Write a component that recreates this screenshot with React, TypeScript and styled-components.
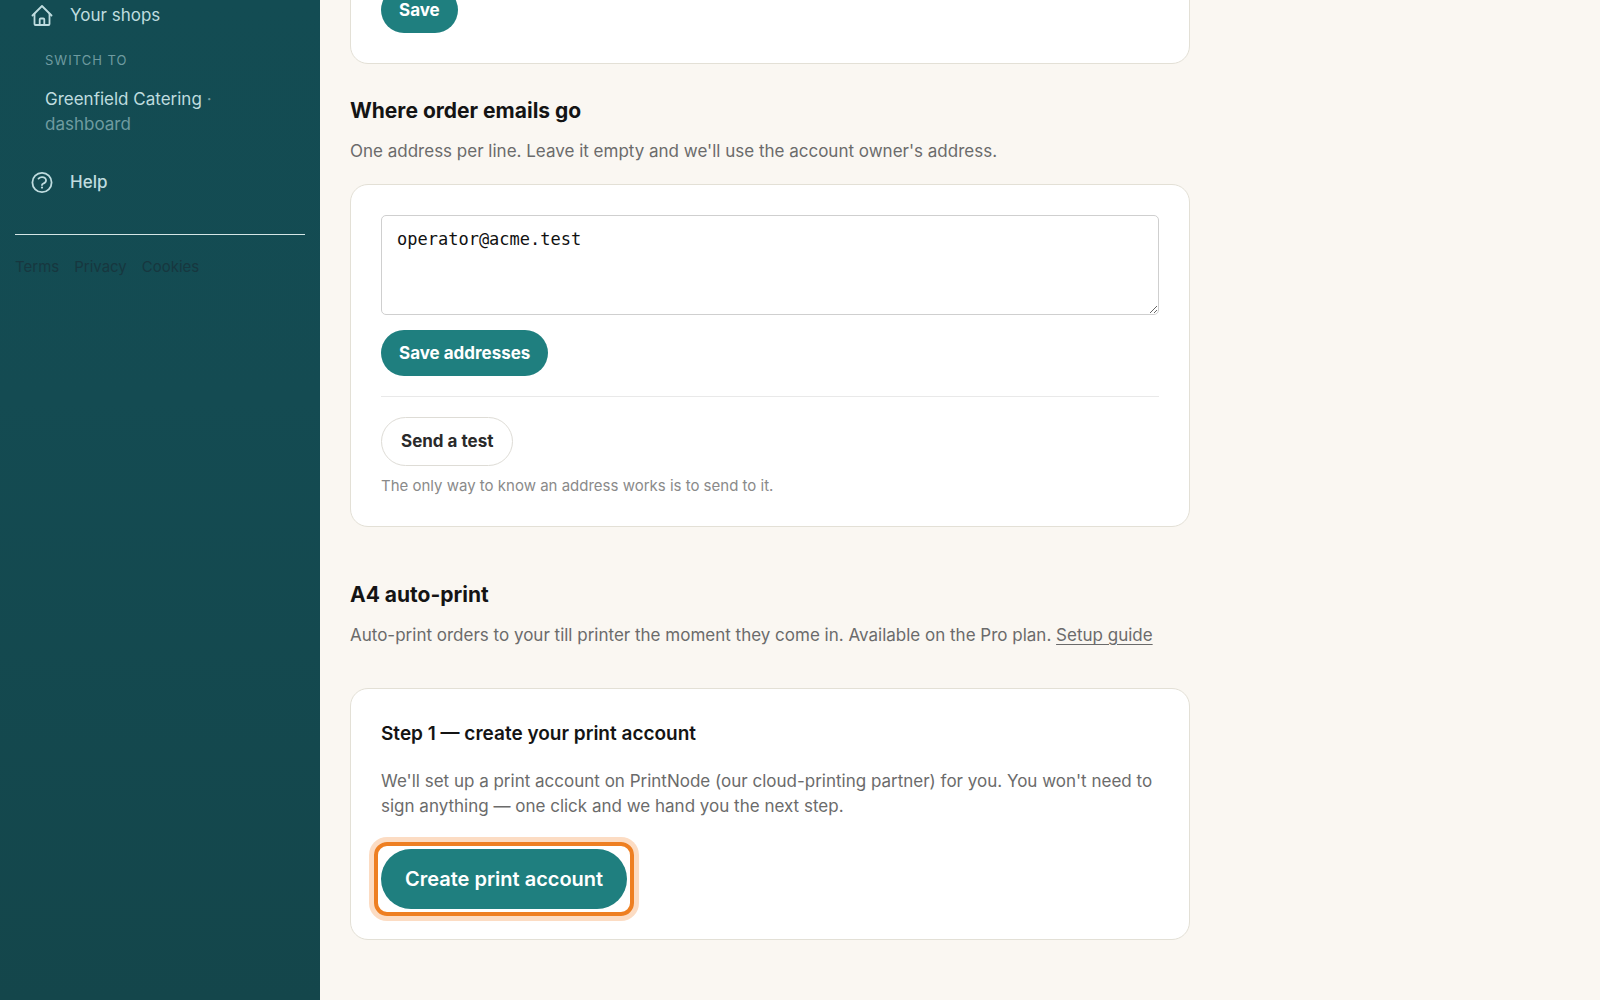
import React from "react";
import styled, { createGlobalStyle, css } from "styled-components";

const GlobalStyle = createGlobalStyle`
  *, *::before, *::after { box-sizing: border-box; }
  body {
    margin: 0;
    background: #faf7f2;
    color: #141414;
    font-family: Inter, "Liberation Sans", sans-serif;
    font-size: 17px;
    line-height: 25px;
  }
  h2, h3, p { margin: 0; }
`;

const Page = styled.div`
  display: flex;
  min-height: 100vh;
  overflow: hidden;
`;

const Sidebar = styled.aside`
  flex: 0 0 320px;
  padding: 1px 15px 0;
  background: linear-gradient(180deg, #134c53 0%, #144b52 40%, #14464b 100%);
`;

const NavItem = styled.a<{ $strong?: boolean }>`
  display: flex;
  align-items: center;
  gap: 17px;
  padding: 2px 16px;
  color: #bfdcdf;
  font-weight: ${(p) => (p.$strong ? 500 : 400)};
  text-decoration: none;

  svg { flex: none; }
`;

const Switcher = styled.div`
  padding: 18px 30px 31px;
`;

const SwitchLabel = styled.p`
  margin-bottom: 15px;
  color: #6f9ba0;
  font-size: 13px;
  line-height: 24px;
  letter-spacing: 1px;
  text-transform: uppercase;
`;

const SwitchLink = styled.a`
  display: flex;
  flex-wrap: wrap;
  column-gap: 5px;
  max-width: 200px;
  color: #bfdcdf;
  text-decoration: none;
`;

const Muted = styled.span`
  color: #6f9ba0;
`;

const LegalLinks = styled.nav`
  display: flex;
  gap: 15px;
  margin-top: 37px;
  padding-top: 19px;
  border-top: 1px solid #d5e6e6;

  a {
    color: #17373f;
    font-size: 15px;
    text-decoration: none;
  }
`;

/* The page rests part-way down, so the first card begins above the fold. */
const Main = styled.main`
  flex: 1;
  min-width: 0;
  max-width: 900px;
  margin-top: -44px;
  padding: 0 30px 60px;
`;

const Section = styled.section<{ $gap: number }>`
  margin-top: ${(p) => p.$gap}px;
`;

const Card = styled.div`
  padding: 30px;
  background: #fff;
  border: 1px solid #e3e0d6;
  border-radius: 18px;
`;

const SectionTitle = styled.h2`
  margin-bottom: 13px;
  font-size: 21px;
  line-height: 30px;
  font-weight: 700;
`;

const StepTitle = styled.h3`
  margin-bottom: 20px;
  font-size: 19px;
  line-height: 30px;
  font-weight: 600;
`;

const Lead = styled.p<{ $gap: number }>`
  margin-bottom: ${(p) => p.$gap}px;
  color: #6b6b6b;

  a {
    color: inherit;
    text-underline-offset: 3px;
  }
`;

const Addresses = styled.textarea`
  display: block;
  width: 100%;
  height: 100px;
  margin-bottom: 15px;
  padding: 11px 15px;
  background: #fff;
  border: 1px solid #cfcfcf;
  border-radius: 5px;
  color: #111;
  font-family: "DejaVu Sans Mono", monospace;
  font-size: 17px;
  line-height: 25px;
  resize: vertical;
`;

const Button = styled.button<{ $kind?: "outline" | "large" }>`
  display: block;
  height: 46px;
  padding: 0 18px;
  background: #1f7f7f;
  border: 0;
  border-radius: 30px;
  color: #fff;
  font-family: inherit;
  font-size: 17px;
  line-height: 25px;
  font-weight: 700;
  white-space: nowrap;

  ${(p) => p.$kind === "outline" && css`
    height: 49px;
    padding: 0 19px;
    background: #fff;
    border: 1px solid #dedcd6;
    color: #2a2a2a;
  `}

  ${(p) => p.$kind === "large" && css`
    height: 60px;
    padding: 0 24px;
    font-size: 20px;
    font-weight: 600;
  `}
`;

const Divider = styled.hr`
  height: 1px;
  margin: 20px 0;
  border: 0;
  background: #e9e9e9;
`;

const Hint = styled.p`
  margin-top: 9px;
  color: #8a8a8a;
  font-size: 15px;
  line-height: 21px;
`;

const Spotlight = styled.div`
  position: relative;
  width: fit-content;

  &::after {
    content: "";
    position: absolute;
    inset: -7px;
    border: 4px solid #ee7f22;
    border-radius: 13px;
    box-shadow: 0 0 0 5px #fcdcc3;
    pointer-events: none;
  }
`;

const HomeIcon = () => (
  <svg width="22" height="22" viewBox="0 0 22 22" fill="none" stroke="currentColor" strokeWidth="1.8" strokeLinecap="round" strokeLinejoin="round" aria-hidden="true">
    <path d="M1.5 10.500 11 1 20.500 10.500" />
    <path d="M3.500 8.700V19a1 1 0 0 0 1 1h13a1 1 0 0 0 1-1V8.700" />
    <path d="M8.700 19.800v-5.300a1 1 0 0 1 1-1h2.600a1 1 0 0 1 1 1v5.300" />
  </svg>
);

const HelpIcon = () => (
  <svg width="22" height="22" viewBox="0 0 22 22" fill="none" stroke="currentColor" strokeWidth="1.8" strokeLinecap="round" strokeLinejoin="round" aria-hidden="true">
    <circle cx="11" cy="10.500" r="9.600" />
    <path d="M7.500 6.600c1.900-1.800 5-1.900 6.600-.4 1.400 1.400 1.200 3.400-.3 4.500-1.400 1-2.800 1.100-2.800 2.300" />
    <path d="M11 15.500v.1" strokeWidth="2.200" />
  </svg>
);

export default function App() {
  return (
    <Page>
      <GlobalStyle />
      <Sidebar>
        <NavItem href="#shops"><HomeIcon />Your shops</NavItem>
        <Switcher>
          <SwitchLabel>Switch to</SwitchLabel>
          <SwitchLink href="#greenfield">
            <span>Greenfield Catering</span>
            <Muted>·</Muted>
            <Muted>dashboard</Muted>
          </SwitchLink>
        </Switcher>
        <NavItem href="#help" $strong><HelpIcon />Help</NavItem>
        <LegalLinks aria-label="Legal">
          <a href="#terms">Terms</a>
          <a href="#privacy">Privacy</a>
          <a href="#cookies">Cookies</a>
        </LegalLinks>
      </Sidebar>

      <Main>
        <Card>
          <Button type="button">Save</Button>
        </Card>

        <Section $gap={32}>
          <SectionTitle id="emails-title">Where order emails go</SectionTitle>
          <Lead $gap={20}>One address per line. Leave it empty and we'll use the account owner's address.</Lead>
          <Card>
            <Addresses aria-labelledby="emails-title" defaultValue="operator@acme.test" spellCheck={false} />
            <Button type="button">Save addresses</Button>
            <Divider />
            <Button type="button" $kind="outline">Send a test</Button>
            <Hint>The only way to know an address works is to send to it.</Hint>
          </Card>
        </Section>

        <Section $gap={53}>
          <SectionTitle>A4 auto-print</SectionTitle>
          <Lead $gap={40}>
            Auto-print orders to your till printer the moment they come in. Available on the Pro plan. <a href="#setup">Setup guide</a>
          </Lead>
          <Card>
            <StepTitle>Step 1 — create your print account</StepTitle>
            <Lead $gap={30}>
              We'll set up a print account on PrintNode (our cloud-printing partner) for you. You won't need to sign anything — one click and we hand you the next step.
            </Lead>
            <Spotlight>
              <Button type="button" $kind="large">Create print account</Button>
            </Spotlight>
          </Card>
        </Section>
      </Main>
    </Page>
  );
}
